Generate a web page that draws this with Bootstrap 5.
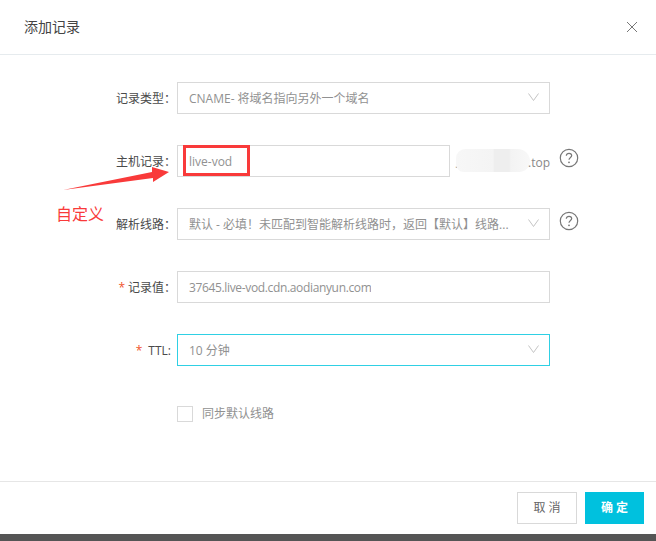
<!DOCTYPE html>
<html lang="zh">
<head>
<meta charset="utf-8">
<title>添加记录</title>
<link href="https://cdn.jsdelivr.net/npm/bootstrap@5.3.0/dist/css/bootstrap.min.css" rel="stylesheet">
<style>
html,body{height:541px;overflow:hidden;background:#fff}
body{font-family:"Open Sans","Noto Sans CJK SC",sans-serif;font-size:12px;color:#333;position:relative}
.dlg{height:534px;background:#fff}
.dlg-head{height:55px;border-bottom:1px solid #e6ebee;padding:0 18px 0 24px}
.dlg-title{font-size:14px;color:#444;position:relative;top:-1px}
.dlg-body{height:426px;padding-top:27px}
.frow{height:32px;margin-bottom:31px}
.flabel{width:177px;padding-right:1px;padding-top:2px;text-align:right;color:#4a4a4a;flex:none}
.flabel.half{padding-right:6px}
.req{color:#f0532d;margin-right:3px}
.fbox{height:32px;border:1px solid #d9d9d9;padding:2px 11px 0;color:#919191;background:#fff;width:373px;flex:none}
.fbox.short{width:273px}
.fbox.active{border-color:#2fd0e4}
.ftext{white-space:nowrap;overflow:hidden}
.ftext.narrow{letter-spacing:-.35px}
.chev{flex:none;margin-left:auto;margin-right:-1px;position:relative;top:-2px}
.suffix{width:100px;flex:none;color:#888;text-align:right;position:relative;padding-top:4px}
.smudge{position:absolute;left:6px;top:-1px;width:74px;height:23px;border-radius:12px 16px 14px 10px;background:linear-gradient(90deg,#f7f7f7 0,#f4f4f4 50%,#eeeeee 52%,#eeeeee 72%,#f3f3f3 74%,#f8f8f8 100%)}
.speck{position:absolute;left:5px;top:5px;color:#999}
.help{flex:none;margin-left:9px;position:relative;top:-3px}
.chk{width:16px;height:16px;border:1px solid #d9d9d9;flex:none;margin-right:9px;margin-left:177px}
.chk-row{margin-top:39px;color:#919191}
.dlg-foot{height:53px;border-top:1px solid #e6e6e6;padding:10px 12px 0 0}
.bcancel,.bok{height:32px;width:60px;border-radius:0;padding:0 0 0 3px;font-size:12px;letter-spacing:3px;line-height:30px}
.bcancel{border:1px solid #d9d9d9;background:#fff;color:#666;margin-right:8px}
.bok{border:1px solid #00c1de;background:#00c1de;color:#fff;font-weight:700;width:59px}
.strip{height:7px;background:#555}
.redbox{position:absolute;left:183px;top:145px;width:67px;height:31px;border:3px solid #f93a3a}
.arrow{position:absolute;left:60px;top:165px}
.note{position:absolute;left:56px;top:204px;font-size:16px;line-height:20px;color:#f93a3a}
</style>
</head>
<body>
<div class="dlg d-flex flex-column">
  <div class="dlg-head d-flex align-items-center justify-content-between">
    <div class="dlg-title">添加记录</div>
    <svg width="12" height="12" viewBox="0 0 12 12"><path d="M1 1L11 11M11 1L1 11" stroke="#777" stroke-width="1" fill="none"/></svg>
  </div>
  <div class="dlg-body">
    <div class="frow d-flex align-items-center">
      <div class="flabel">记录类型：</div>
      <div class="fbox d-flex align-items-center"><span class="ftext">CNAME- 将域名指向另外一个域名</span>
        <svg class="chev" width="11" height="8" viewBox="0 0 11 8"><path d="M.5.5L5.5 7.5L10.5.5" stroke="#c4c4c4" fill="none"/></svg></div>
    </div>
    <div class="frow d-flex align-items-center">
      <div class="flabel">主机记录：</div>
      <div class="fbox short d-flex align-items-center"><span class="ftext">live-vod</span></div>
      <div class="suffix"><span class="speck">.</span><span class="smudge"></span><span class="position-relative">.top</span></div>
      <svg class="help" width="20" height="20" viewBox="0 0 20 20"><circle cx="10" cy="10" r="8.7" stroke="#777" stroke-width="1.2" fill="none"/><path d="M7.3 7.8C7.3 6.2 8.5 5.3 10 5.3S12.7 6.2 12.7 7.6C12.7 9.4 10 9.5 10 11.8" stroke="#777" stroke-width="1.2" fill="none"/><circle cx="10" cy="14.3" r=".9" fill="#777"/></svg>
    </div>
    <div class="frow d-flex align-items-center">
      <div class="flabel">解析线路：</div>
      <div class="fbox d-flex align-items-center"><span class="ftext">默认 - 必填！未匹配到智能解析线路时，返回【默认】线路...</span>
        <svg class="chev" width="11" height="8" viewBox="0 0 11 8"><path d="M.5.5L5.5 7.5L10.5.5" stroke="#c4c4c4" fill="none"/></svg></div>
      <svg class="help" width="20" height="20" viewBox="0 0 20 20"><circle cx="10" cy="10" r="8.7" stroke="#777" stroke-width="1.2" fill="none"/><path d="M7.3 7.8C7.3 6.2 8.5 5.3 10 5.3S12.7 6.2 12.7 7.6C12.7 9.4 10 9.5 10 11.8" stroke="#777" stroke-width="1.2" fill="none"/><circle cx="10" cy="14.3" r=".9" fill="#777"/></svg>
    </div>
    <div class="frow d-flex align-items-center">
      <div class="flabel"><span class="req">*</span>记录值：</div>
      <div class="fbox d-flex align-items-center"><span class="ftext narrow">37645.live-vod.cdn.aodianyun.com</span></div>
    </div>
    <div class="frow d-flex align-items-center">
      <div class="flabel half"><span class="req">*</span> TTL:</div>
      <div class="fbox active d-flex align-items-center"><span class="ftext">10 分钟</span>
        <svg class="chev" width="11" height="8" viewBox="0 0 11 8"><path d="M.5.5L5.5 7.5L10.5.5" stroke="#c4c4c4" fill="none"/></svg></div>
    </div>
    <div class="chk-row d-flex align-items-center">
      <div class="chk"></div><span>同步默认线路</span>
    </div>
  </div>
  <div class="dlg-foot d-flex justify-content-end align-items-start">
    <button type="button" class="btn bcancel">取消</button>
    <button type="button" class="btn bok">确定</button>
  </div>
</div>
<div class="strip"></div>
<div class="redbox"></div>
<svg class="arrow" width="112" height="30" viewBox="0 0 112 30"><path d="M3 25L92 7L92 2L109 7L93 17L93 13Z" fill="#f93a3a"/></svg>
<div class="note">自定义</div>
</body>
</html>
